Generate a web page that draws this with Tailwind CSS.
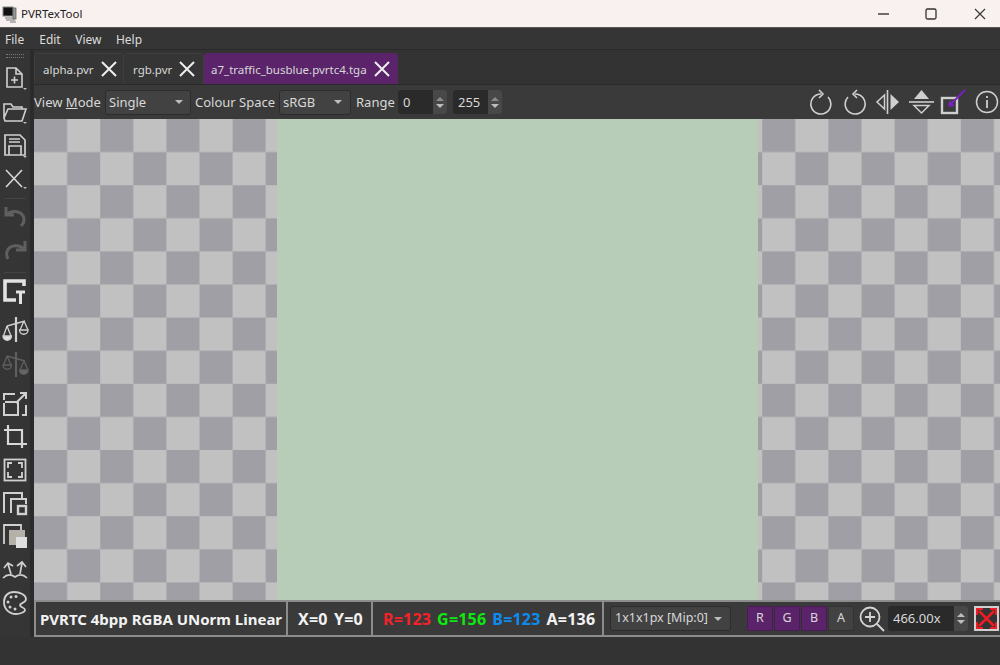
<!doctype html>
<html lang="en">
<head>
<meta charset="utf-8">
<title>PVRTexTool</title>
<script src="https://cdn.jsdelivr.net/npm/@tailwindcss/browser@4"></script>
</head>
<body class="w-[1000px] h-[665px] overflow-hidden bg-[#333333] text-[#d8d8d8] font-['Noto_Sans',sans-serif] text-[13px]">
<div class="flex flex-col h-[665px]">
  <!-- title bar -->
  <div class="flex items-center h-[28px] bg-[#f9f0f0] text-[#222] border-b border-[#5a5a5a] shrink-0">
    <svg class="ml-[2px] w-[18px] h-[18px]" viewBox="0 0 18 18"><rect x="1" y="2" width="10" height="9" fill="#111" stroke="#888"/><rect x="11" y="3" width="3" height="11" fill="#999" stroke="#555" stroke-width=".7"/><path d="M3 13h8M4 15h9M8 17h6" stroke="#777" stroke-width="1.2"/></svg>
    <span class="ml-[1px] text-[11.500px]">PVRTexTool</span>
    <div class="ml-auto flex items-center h-full">
      <svg class="w-[14px] h-[14px] mr-[33px]" viewBox="0 0 14 14"><path d="M1 7h11" stroke="#333" stroke-width="1.4"/></svg>
      <svg class="w-[14px] h-[14px] mr-[35px]" viewBox="0 0 14 14"><rect x="2" y="2" width="10" height="10" rx="1.5" fill="none" stroke="#333" stroke-width="1.3"/></svg>
      <svg class="w-[14px] h-[14px] mr-[13px]" viewBox="0 0 14 14"><path d="M2 2l10 10M12 2L2 12" stroke="#333" stroke-width="1.1"/></svg>
    </div>
  </div>
  <!-- menu -->
  <div class="flex items-center h-[22px] pt-[3px] bg-[#353535] border-b border-[#2a2a2a] shrink-0 text-[12px] text-[#dcdcdc]">
    <span class="ml-[5px]">File</span><span class="ml-[15px]">Edit</span><span class="ml-[14.500px]">View</span><span class="ml-[14.500px]">Help</span>
  </div>
  <div class="flex flex-1 min-h-0">
    <!-- left tool column -->
    <div class="w-[34px] shrink-0 h-[587px] bg-[#353535] border-r-[4px] border-[#2b2b2b] flex flex-col items-center text-[#d0d0d0]">
      <div class="mt-[4px] mb-[3px] w-[18px] h-[4px] border-y border-dotted border-[#777]"></div>
      <div class="h-[33px] flex items-center justify-center"><svg class="w-[24px] h-[26px]" viewBox="0 0 24 26" fill="none" stroke="#d0d0d0" stroke-width="1.6"><path d="M4 3h9l6 6v13H4zM13 3v6h6M8 15h7M11.500 11.500v7"/><path d="M20 23h4l-2 2z" fill="#bbb" stroke="none"/></svg></div>
      <div class="h-[35px] flex items-center justify-center"><svg class="w-[26px] h-[24px]" viewBox="0 0 26 24" fill="none" stroke="#d0d0d0" stroke-width="1.6"><path d="M2 18V4h7l2 3h9v2M2 18l4-9h18l-4 12H3z"/><path d="M21 22h4l-2 2z" fill="#bbb" stroke="none"/></svg></div>
      <div class="h-[33px] flex items-center justify-center"><svg class="w-[26px] h-[26px]" viewBox="0 0 26 26" fill="none" stroke="#d0d0d0" stroke-width="1.7"><path d="M3 2h15l5 5v15H3zM7 6h11M7 9h11M7 22v-9h12v9"/><path d="M21 23h4l-2 2z" fill="#bbb" stroke="none"/></svg></div>
      <div class="h-[33px] flex items-center justify-center"><svg class="w-[26px] h-[24px]" viewBox="0 0 26 24" fill="none" stroke="#d8d8d8" stroke-width="1.6"><path d="M4 3l16 17M20 3L4 20"/><path d="M21 20h4l-2 2z" fill="#bbb" stroke="none"/></svg></div>
      <div class="mt-[3px] w-[22px] border-t border-[#444]"></div>
      <div class="h-[34px] flex items-center justify-center"><svg class="w-[24px] h-[24px]" viewBox="0 0 24 24" fill="none" stroke="#5f5f5f" stroke-width="3"><path d="M3 3v8h8M3 11c6-6 17-4 18 4 .5 3-1 5-3 7"/></svg></div>
      <div class="h-[34px] flex items-center justify-center"><svg class="w-[24px] h-[24px]" viewBox="0 0 24 24" fill="none" stroke="#5f5f5f" stroke-width="3"><path d="M22 3v9h-9M22 12c-5-6-16-6-18 2-1 3 0 5 1 7"/></svg></div>
      <div class="mt-[5px] w-[22px] border-t border-[#444]"></div>
      <div class="mt-[1px] h-[34px] flex items-center justify-center"><svg class="w-[26px] h-[28px]" viewBox="0 0 26 28" fill="none" stroke="#e2e2e2" stroke-width="3.600"><path d="M22 9V4H3v19h11"/><path d="M14 15h9" stroke-width="3"/><path d="M18.500 15v12" stroke-width="3"/></svg></div>
      <div class="mt-[4px] h-[34px] flex items-center justify-center"><svg class="w-[27px] h-[27px]" viewBox="0 0 27 27" fill="none" stroke="#d0d0d0" stroke-width="1.300"><path d="M14 1v25" stroke-width="2.200"/><path d="M5 10L23 5M5 10L1.500 20M5 10l4 10M22 5l-4 9M22 5l4 9"/><path d="M1 20a4 4 0 0 0 8.500 0z" fill="#e2e2e2"/><path d="M17.500 14a4.200 4.200 0 0 0 8.500 0z"/></svg></div>
      <div class="h-[36px] flex items-center justify-center"><svg class="w-[27px] h-[27px]" viewBox="0 0 27 27" fill="none" stroke="#5f5f5f" stroke-width="1.300"><path d="M14 1v25" stroke-width="2.200"/><path d="M5 5l18 5M5 5l-3.500 9M5 5l4 9M22 10l-4 9M22 10l4 9"/><path d="M1 14a4 4 0 0 0 8.500 0z"/><path d="M17.500 19a4.200 4.200 0 0 0 8.500 0z" fill="#666"/></svg></div>
      <div class="mt-[5px] h-[33px] flex items-center justify-center"><svg class="w-[26px] h-[26px]" viewBox="0 0 26 26" fill="none" stroke="#d0d0d0" stroke-width="2"><path d="M2 9V3h11M2 12v12h14V11H3M20 24h4V14M14 12l10-10M18 2h6v6"/></svg></div>
      <div class="h-[33px] flex items-center justify-center"><svg class="w-[26px] h-[26px]" viewBox="0 0 26 26" fill="none" stroke="#d8d8d8" stroke-width="2.200"><path d="M2 6h18v18M6 1v19h19"/></svg></div>
      <div class="h-[33px] flex items-center justify-center"><svg class="w-[24px] h-[24px]" viewBox="0 0 24 24" fill="none" stroke="#d0d0d0" stroke-width="1.800"><rect x="1.500" y="1.500" width="21" height="21"/><path d="M5 10V5h4M15 5h4v5M19 14v5h-4M9 19H5v-5"/></svg></div>
      <div class="h-[33px] flex items-center justify-center"><svg class="w-[26px] h-[26px]" viewBox="0 0 26 26" fill="none" stroke="#d0d0d0" stroke-width="2"><path d="M2 23V3h18v5M9 23v-14h15v5"/><rect x="16" y="16" width="8" height="8" stroke-width="2.400"/></svg></div>
      <div class="h-[34px] flex items-center justify-center"><svg class="w-[26px] h-[26px]" viewBox="0 0 26 26"><path d="M2 21V2h17v5" fill="none" stroke="#d0d0d0" stroke-width="1.800"/><rect x="7" y="7" width="16" height="15" fill="#b5b0a8"/><rect x="14" y="14" width="11" height="11" fill="#e0e0e0"/></svg></div>
      <div class="h-[33px] flex items-center justify-center"><svg class="w-[26px] h-[20px]" viewBox="0 0 26 20" fill="none" stroke="#d0d0d0" stroke-width="1.700"><path d="M1 18c4-4 8-4 12-1 4-3 8-3 12 1M9 14L6 4M2 8l4-5 5 3M18 14l2-11M15 6l5-4 4 5"/></svg></div>
      <div class="h-[33px] flex items-center justify-center"><svg class="w-[26px] h-[26px]" viewBox="0 0 26 26" fill="none" stroke="#d0d0d0" stroke-width="1.800"><path d="M12 2C6 2 2 6 2 12c0 7 5 12 12 12 4 0 9-2 9-4 0-3-5-2-5-5 0-2 6-2 6-6 0-4-6-7-12-7z"/><g fill="#d0d0d0" stroke="none"><circle cx="9" cy="7" r="1.500"/><circle cx="14" cy="6.500" r="1.500"/><circle cx="6" cy="12" r="1.500"/><circle cx="8" cy="17" r="1.500"/><circle cx="13" cy="19" r="1.500"/></g></svg></div>
    </div>
    <!-- main -->
    <div class="flex-1 min-w-0 flex flex-col">
      <!-- tabs -->
      <div class="h-[35px] shrink-0 flex items-end bg-[#333333] border-b border-[#2a2a2a] text-[11.500px]">
        <div class="w-[90px] h-[31px] flex items-center pl-[8px] border-t border-x border-[#3e3e3e] rounded-t-[4px] bg-[#353535]">
          <span class="pt-[2px]">alpha.pvr</span>
          <svg class="ml-[6px] shrink-0 w-[18px] h-[18px]" viewBox="0 0 18 18"><path d="M2 2l14 14M16 2L2 16" stroke="#eee" stroke-width="2"/></svg>
        </div>
        <div class="w-[80px] h-[31px] flex items-center pl-[9px] border-t border-r border-[#3e3e3e] rounded-t-[4px] bg-[#353535]">
          <span class="pt-[2px]">rgb.pvr</span>
          <svg class="ml-[6px] shrink-0 w-[18px] h-[18px]" viewBox="0 0 18 18"><path d="M2 2l14 14M16 2L2 16" stroke="#eee" stroke-width="2"/></svg>
        </div>
        <div class="w-[194px] h-[31px] flex items-center pl-[7px] rounded-t-[4px] bg-[#5b246a]">
          <span class="pt-[2px]">a7_traffic_busblue.pvrtc4.tga</span>
          <svg class="ml-[6px] shrink-0 w-[18px] h-[18px]" viewBox="0 0 18 18"><path d="M2 2l14 14M16 2L2 16" stroke="#eee" stroke-width="2"/></svg>
        </div>
      </div>
      <!-- view toolbar -->
      <div class="h-[34px] shrink-0 flex items-center bg-[#3a3a3a] text-[13px]">
        <span class="w-[71px] pt-[2px]">View <u class="underline">M</u>ode</span>
        <div class="w-[86px] h-[25px] flex items-center justify-between px-[3px] bg-[#424242] border border-[#2c2c2c] rounded-[3px]"><span class="pt-[2px]">Single</span><span class="w-0 h-0 mr-[4px] border-x-[4.500px] border-t-[4px] border-x-transparent border-t-[#bdbdbd]"></span></div>
        <span class="ml-[4px] w-[84px] pt-[2px]">Colour Space</span>
        <div class="w-[72px] h-[25px] flex items-center justify-between px-[3px] bg-[#424242] border border-[#2c2c2c] rounded-[3px]"><span class="pt-[2px]">sRGB</span><span class="w-0 h-0 mr-[5px] border-x-[4.500px] border-t-[4px] border-x-transparent border-t-[#bdbdbd]"></span></div>
        <span class="ml-[5px] w-[42px] pt-[2px]">Range</span>
        <div class="w-[49px] h-[24px] flex items-center bg-[#2a2a2a] rounded-[3px] pl-[5px]"><span class="flex-1 pt-[1px]">0</span>
          <div class="w-[14px] h-full bg-[#484848] rounded-r-[3px] flex flex-col items-center justify-center gap-[3px]"><span class="w-0 h-0 border-x-[4px] border-b-[4px] border-x-transparent border-b-[#8a8a8a]"></span><span class="w-0 h-0 border-x-[4px] border-t-[4px] border-x-transparent border-t-[#bdbdbd]"></span></div></div>
        <div class="ml-[6px] w-[49px] h-[24px] flex items-center bg-[#2a2a2a] rounded-[3px] pl-[5px]"><span class="flex-1 pt-[1px]">255</span>
          <div class="w-[14px] h-full bg-[#484848] rounded-r-[3px] flex flex-col items-center justify-center gap-[3px]"><span class="w-0 h-0 border-x-[4px] border-b-[4px] border-x-transparent border-b-[#8a8a8a]"></span><span class="w-0 h-0 border-x-[4px] border-t-[4px] border-x-transparent border-t-[#bdbdbd]"></span></div></div>
        <div class="ml-auto flex items-center">
          <svg class="w-[24px] h-[26px]" viewBox="0 0 24 26" fill="none" stroke="#cfcfcf" stroke-width="1.600"><path d="M18 8A10 10 0 1 1 11 5"/><path d="M9 1l4 4-4 4"/></svg>
          <svg class="ml-[10px] w-[22px] h-[26px]" viewBox="0 0 22 26" fill="none" stroke="#cfcfcf" stroke-width="1.600"><path d="M4 8A10 10 0 1 0 11 5"/><path d="M13 1L9 5l4 4"/></svg>
          <svg class="ml-[9px] w-[25px] h-[26px]" viewBox="0 0 25 26"><path d="M12.500 1v24" stroke="#cfcfcf" stroke-width="1.600"/><path d="M9.500 6v14L2 13z" fill="none" stroke="#cfcfcf" stroke-width="1.500"/><path d="M15.500 5v16L24 13z" fill="#cfcfcf"/></svg>
          <svg class="ml-[9px] w-[25px] h-[26px]" viewBox="0 0 25 26"><path d="M0 13h25" stroke="#cfcfcf" stroke-width="1.600"/><path d="M12.500 1L5 10h15z" fill="#cfcfcf"/><path d="M5 16.500h15L12.500 24z" fill="none" stroke="#cfcfcf" stroke-width="1.500"/></svg>
          <svg class="ml-[6px] w-[26px] h-[26px]" viewBox="0 0 26 26"><rect x="2" y="9" width="15" height="15" fill="none" stroke="#cfcfcf" stroke-width="2.400"/><path d="M25 1L9 17M9 17l1-5M9 17l5-1" fill="none" stroke="#7a1fc4" stroke-width="1.800"/></svg>
          <svg class="ml-[9px] mr-[1px] w-[24px] h-[24px]" viewBox="0 0 24 24" fill="none" stroke="#cfcfcf" stroke-width="1.500"><circle cx="12" cy="12" r="10.500"/><path d="M12 10v8M12 6v2" stroke-width="1.800"/></svg>
        </div>
      </div>
      <!-- canvas -->
      <div class="relative h-[481px] shrink-0 flex">
        <svg class="absolute inset-0 w-full h-full" aria-hidden="true"><defs><pattern id="checker" width="66.200" height="66.200" patternUnits="userSpaceOnUse"><rect width="66.200" height="66.200" fill="#c1c1c1"/><rect width="33.100" height="33.100" fill="#a19fa6"/><rect x="33.100" y="33.100" width="33.100" height="33.100" fill="#a19fa6"/></pattern></defs><rect width="100%" height="100%" fill="url(#checker)"/></svg>
        <div class="relative ml-[243px] w-[481px] h-full bg-[#b7cdb7]"></div>
      </div>
      <!-- status -->
      <div class="h-[37px] shrink-0 flex bg-[#3a3a3a] border-y-2 border-[#8c8c8c]">
        <div class="w-[254px] shrink-0 flex items-center pl-[4px] pt-[1px] border-x-2 border-[#8c8c8c] font-bold text-[15px] text-[#f2f2f2]">PVRTC 4bpp RGBA UNorm Linear</div>
        <div class="w-[85px] shrink-0 flex items-center pl-[10px] pt-[1px] border-r-2 border-[#8c8c8c] font-bold text-[16px] tracking-[0.2px] [word-spacing:2px] text-[#f2f2f2] whitespace-nowrap">X=0 Y=0</div>
        <div class="w-[231px] shrink-0 flex items-center pl-[10px] pt-[1px] gap-[6px] border-r-2 border-[#8c8c8c] font-bold text-[16px] tracking-[0.2px]">
          <span class="text-[#f5222a]">R=123</span><span class="text-[#0ce90c]">G=156</span><span class="text-[#0c8cf0]">B=123</span><span class="text-[#f2f2f2]">A=136</span>
        </div>
        <div class="flex-1 min-w-0 flex items-center text-[12.500px]">
          <div class="ml-[6px] w-[121px] h-[25px] flex items-center justify-between px-[4px] bg-[#424242] border border-[#2c2c2c] rounded-[3px]"><span>1x1x1px [Mip:0]</span><span class="w-0 h-0 mr-[4px] border-x-[4.500px] border-t-[4px] border-x-transparent border-t-[#bdbdbd]"></span></div>
          <div class="ml-[16px] flex gap-px">
            <div class="w-[26px] h-[25px] flex items-center justify-center bg-[#5b246a] border border-[#4a1c56] rounded-[2px]">R</div>
            <div class="w-[26px] h-[25px] flex items-center justify-center bg-[#5b246a] border border-[#4a1c56] rounded-[2px]">G</div>
            <div class="w-[26px] h-[25px] flex items-center justify-center bg-[#5b246a] border border-[#4a1c56] rounded-[2px]">B</div>
            <div class="w-[26px] h-[25px] flex items-center justify-center bg-[#424242] border border-[#333] rounded-[2px]">A</div>
          </div>
          <svg class="ml-[5px] w-[26px] h-[26px]" viewBox="0 0 26 26" fill="none" stroke="#d4d4d4" stroke-width="1.800"><circle cx="11" cy="11" r="9.500"/><path d="M6 11h10M11 6v10M18 18l7 7"/></svg>
          <div class="ml-[3px] w-[80px] h-[25px] flex items-center bg-[#2a2a2a] rounded-[3px] pl-[5px]"><span class="flex-1 text-[13px]">466.00x</span>
            <div class="w-[14px] h-full bg-[#484848] rounded-r-[3px] flex flex-col items-center justify-center gap-[3px]"><span class="w-0 h-0 border-x-[4px] border-b-[4px] border-x-transparent border-b-[#bdbdbd]"></span><span class="w-0 h-0 border-x-[4px] border-t-[4px] border-x-transparent border-t-[#bdbdbd]"></span></div></div>
          <div class="ml-[6px] w-[25px] h-[25px] shrink-0 border-[2px] border-[#cfcfcf] bg-[#333] flex items-center justify-center">
            <svg class="w-[21px] h-[21px]" viewBox="0 0 21 21" fill="none" stroke="#ee1c25" stroke-width="2.600"><path d="M3 3l15 15M18 3L3 18"/><path d="M1 7V1h6M14 1h6v6M20 14v6h-6M7 20H1v-6" stroke-width="2"/></svg>
          </div>
        </div>
      </div>
    </div>
  </div>
</div>
</body>
</html>
